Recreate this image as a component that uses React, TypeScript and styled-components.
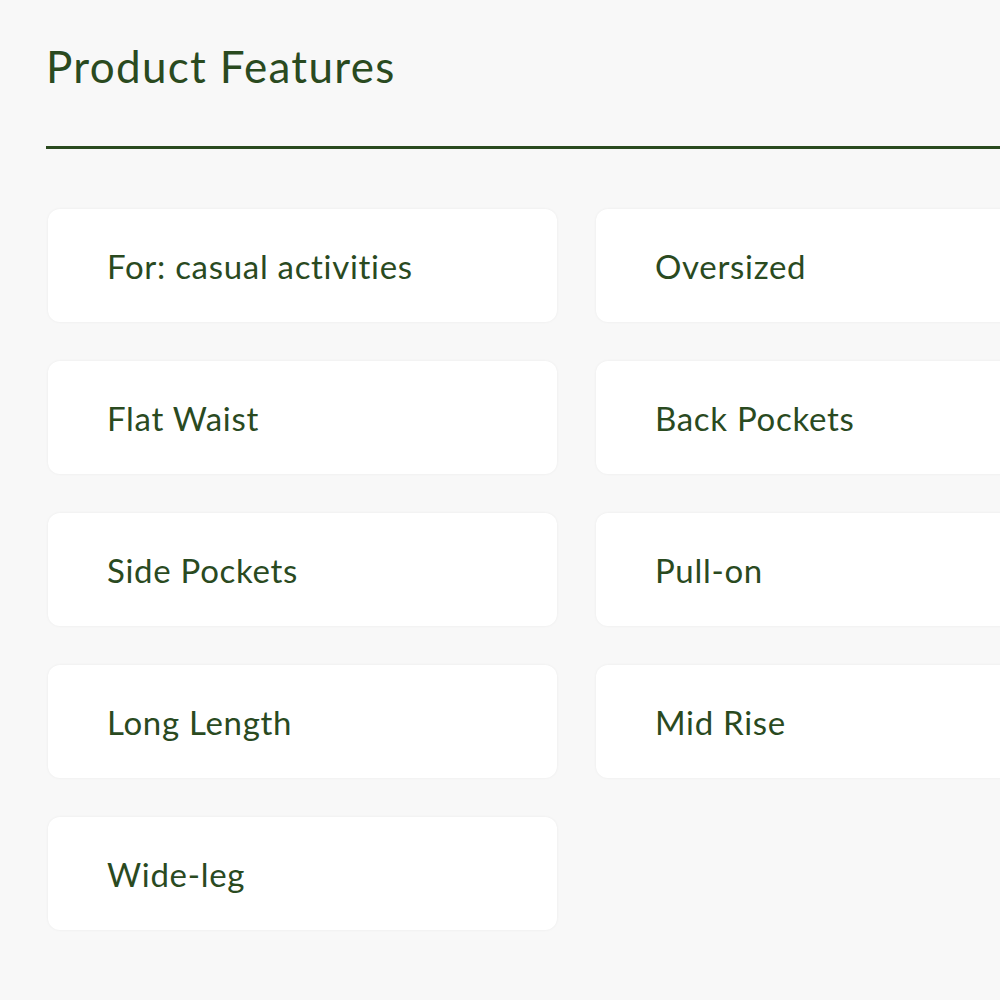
import React from "react";
import styled, { createGlobalStyle } from "styled-components";

const Global = createGlobalStyle`
  html, body { margin: 0; padding: 0; background: #f8f8f8; }
  body { font-family: Lato, "Noto Sans", sans-serif; overflow: hidden; }
`;

const Page = styled.div`
  width: 1000px;
  height: 1000px;
  overflow: hidden;
  padding: 40px 0 0 46px;
  box-sizing: border-box;
  color: #2a4a1f;
`;

const Title = styled.h1`
  margin: 0;
  font-size: 44px;
  font-weight: 400;
  line-height: 52px;
  letter-spacing: 1.3px;
`;

const Rule = styled.div`
  margin-top: 54px;
  height: 3px;
  width: 1000px;
  background: #2a4a1f;
`;

const Grid = styled.div`
  margin-top: 60px;
  padding-left: 2px;
  display: grid;
  grid-template-columns: 509px 509px;
  column-gap: 39px;
  row-gap: 39px;
`;

const Card = styled.div`
  height: 113px;
  box-sizing: border-box;
  background: #ffffff;
  border-radius: 12px;
  box-shadow: 0 0 3px rgba(0, 0, 0, 0.06);
  display: flex;
  align-items: center;
  padding-left: 59px;
  font-size: 33px;
  letter-spacing: 0.7px;
`;

const features = [
  "For: casual activities",
  "Oversized",
  "Flat Waist",
  "Back Pockets",
  "Side Pockets",
  "Pull-on",
  "Long Length",
  "Mid Rise",
  "Wide-leg",
];

export default function App() {
  return (
    <>
      <Global />
      <Page>
        <Title>Product Features</Title>
        <Rule />
        <Grid>
          {features.map((f) => (
            <Card key={f}>{f}</Card>
          ))}
        </Grid>
      </Page>
    </>
  );
}
